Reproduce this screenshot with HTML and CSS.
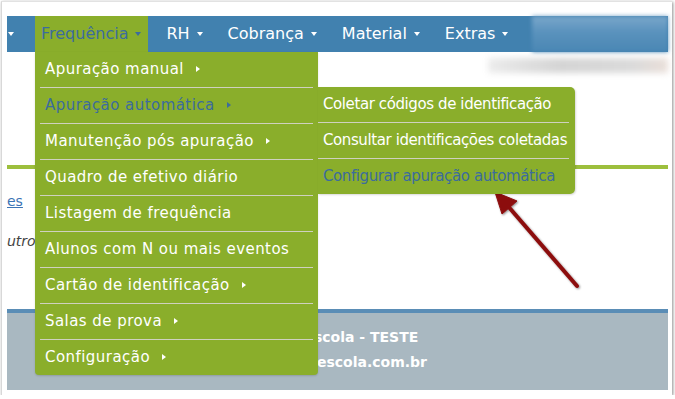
FILE: index.html
```html
<!DOCTYPE html>
<html>
<head>
	<meta charset="utf-8">
	<title>Frequência - apuração automática</title>
	<link rel="stylesheet" href="styles.css">
</head>
<body>
<div class="frame">

	<ul class="nav">
		<li class="nav-item nav-cut"><span class="caret"></span></li>
		<li class="nav-item active">
			Frequência<span class="caret"></span>
			<ul class="dropdown">
				<li><a>Apuração manual<span class="more"></span></a></li>
				<li class="open">
					<a class="current">Apuração automática<span class="more"></span></a>
					<ul class="submenu">
						<li><a>Coletar códigos de identificação</a></li>
						<li><a>Consultar identificações coletadas</a></li>
						<li><a class="current">Configurar apuração automática</a></li>
					</ul>
				</li>
				<li><a>Manutenção pós apuração<span class="more"></span></a></li>
				<li><a>Quadro de efetivo diário</a></li>
				<li><a>Listagem de frequência</a></li>
				<li><a>Alunos com N ou mais eventos</a></li>
				<li><a>Cartão de identificação<span class="more"></span></a></li>
				<li><a>Salas de prova<span class="more"></span></a></li>
				<li><a>Configuração<span class="more"></span></a></li>
			</ul>
		</li>
		<li class="nav-item">RH<span class="caret"></span></li>
		<li class="nav-item">Cobrança<span class="caret"></span></li>
		<li class="nav-item">Material<span class="caret"></span></li>
		<li class="nav-item">Extras<span class="caret"></span></li>
		<li class="nav-blur"></li>
	</ul>

	<div class="main">
		<div class="userbar"><span class="userbar-blur"></span></div>
		<div class="rule"></div>
		<p class="links"><a href="#">es</a></p>
		<p class="note">utro</p>
	</div>

	<div class="footer">
		<p>Sistema Escola - TESTE</p>
		<p class="site">www.sistemaescola.com.br</p>
	</div>

</div>

<!-- annotation arrow drawn over the screenshot -->
<svg class="callout" width="675" height="399" viewBox="0 0 675 399">
	<defs>
		<filter id="shadow" x="-20%" y="-20%" width="140%" height="140%">
			<feDropShadow dx="1" dy="1" stdDeviation="1" flood-color="#000" flood-opacity="0.45"/>
		</filter>
	</defs>
	<g filter="url(#shadow)" fill="#8c0c0c" stroke="#8c0c0c">
		<line x1="577" y1="286" x2="507" y2="205" stroke-width="4" stroke-linecap="round"/>
		<polygon points="495,192 517,201 502,214" stroke-width="1" stroke-linejoin="round"/>
	</g>
</svg>
</body>
</html>
```

FILE: styles.css
```css
body {
	margin: 0;
	background: #fff;
	font-family: "DejaVu Sans", Verdana, sans-serif;
}

ul {
	list-style: none;
	margin: 0;
	padding: 0;
}

p {
	margin: 0;
}

.frame {
	position: relative;
	width: 671px;
	height: 394px;
	box-sizing: border-box;
	margin: 1px 0 0 1px;
	padding: 14px 4px 4px 5px;
	border-top: 1px solid #e2e2e2;
	border-left: 1px solid #d8d8d8;
	box-shadow: 1px 1px 3px rgba(0, 0, 0, 0.45);
}

/* top bar */
.nav {
	display: flex;
	height: 36px;
	background: #4181af;
	color: #fff;
	font-size: 16px;
	line-height: 36px;
}

.nav-item {
	position: relative;
	padding: 0 7px 0 6px;
	margin-right: 12px;
	white-space: nowrap;
}

.nav-cut {
	width: 14px;
	padding: 0 0 0 1px;
	margin-right: 13px;
}

.nav-cut .caret {
	margin-left: 0;
}

.nav-item.active {
	background: #8aae2b;
	color: #3c6c9d;
}

.caret {
	display: inline-block;
	vertical-align: middle;
	margin-left: 7px;
	margin-top: -2px;
	border-left: 3px solid transparent;
	border-right: 3px solid transparent;
	border-top: 4px solid #fff;
}

.active > .caret {
	border-top-color: #3c6c9d;
}

.nav-blur {
	margin-left: auto;
	width: 136px;
	background: linear-gradient(#7aa7cb, #5a92bd 45%, #4a87b4);
	filter: blur(2px);
}

/* dropdown menu */
.dropdown {
	position: absolute;
	top: 36px;
	left: 0;
	width: 283px;
	background: #8aae2b;
	border-radius: 0 0 4px 4px;
	box-shadow: 0 1px 2px rgba(0, 0, 0, 0.15);
	font-size: 15px;
	letter-spacing: 0.45px;
	line-height: 35px;
	color: #fff;
	z-index: 10;
}

.dropdown li {
	position: relative;
}

.dropdown a {
	display: block;
	margin: 0 5px;
	padding-left: 5px;
	border-bottom: 1px solid #cfd1bf;
	color: #fff;
	text-decoration: none;
}

.dropdown li:last-child > a {
	border-bottom: none;
}

.dropdown a.current {
	color: #3c6c9d;
}

.more {
	display: inline-block;
	vertical-align: middle;
	margin-left: 12px;
	margin-top: -2px;
	border-top: 3px solid transparent;
	border-bottom: 3px solid transparent;
	border-left: 4px solid #fff;
}

.current .more {
	border-left-color: #3c6c9d;
}

.submenu {
	position: absolute;
	top: -1px;
	left: 100%;
	width: 257px;
	background: #8aae2b;
	border-radius: 0 5px 5px 0;
	box-shadow: 1px 1px 2px rgba(0, 0, 0, 0.15);
	letter-spacing: -0.4px;
}

.submenu a {
	margin: 0 6px 0 0;
	padding-left: 5px;
	white-space: nowrap;
}

/* page body */
.main {
	height: 257px;
	font-size: 14px;
}

.userbar {
	display: flex;
	justify-content: flex-end;
	padding-top: 6px;
	height: 15px;
}

.userbar-blur {
	width: 180px;
	background: linear-gradient(90deg, #ececec, #d4d4d4 40%, #dadada 80%, #eadfd9);
	filter: blur(3px);
}

.rule {
	margin-top: 92px;
	height: 4px;
	background: #9dbf3d;
}

.links {
	margin-top: 24px;
	line-height: 16px;
}

.links a {
	color: #3b74b5;
}

.note {
	margin-top: 24px;
	line-height: 16px;
	font-style: italic;
	color: #444;
}

.footer {
	border-top: 4px solid #5a8db6;
	background: #a9b8c1;
	padding: 12px 0 0 229px;
	height: 65px;
	color: #fff;
	font-size: 14px;
	font-weight: bold;
	line-height: 25px;
}

.footer .site {
	margin-left: -24px;
}

.callout {
	position: absolute;
	top: 0;
	left: 0;
	pointer-events: none;
}
```
